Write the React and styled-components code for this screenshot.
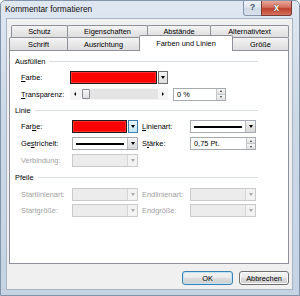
import styled, { createGlobalStyle } from "styled-components";

const Global = createGlobalStyle`
  html, body { margin: 0; padding: 0; background: #fff; }
  body { font-family: "Liberation Sans", Arial, sans-serif; font-size: 7.4px; color: #000; }
`;

const Window = styled.div`
  width: 300px;
  height: 296px;
  box-sizing: border-box;
  border: 1px solid #8393a8;
  border-radius: 5px 5px 0 0;
  background: linear-gradient(#dfe7f1, #ccd8e6 40%, #c6d3e3);
  display: flex;
  flex-direction: column;
`;

const TitleBar = styled.div`
  height: 17px;
  display: flex;
  justify-content: space-between;
  align-items: flex-start;
  padding: 0 7px 0 4px;
`;

const Title = styled.span`
  font-size: 8.3px;
  line-height: 17px;
  color: #111;
`;

const Caption = styled.div`
  display: flex;
`;

const CapBtn = styled.div`
  box-sizing: border-box;
  width: ${(p) => p.$w}px;
  height: 15px;
  border: 1px solid ${(p) => (p.$close ? "#7a3a33" : "#8796aa")};
  border-top: none;
  border-radius: ${(p) => (p.$close ? "0 0 3px 0" : "0 0 0 3px")};
  background: ${(p) =>
    p.$close
      ? "linear-gradient(#e9a99c, #d4705f 45%, #c0402d 55%, #d2735f)"
      : "linear-gradient(#eef3f8, #dde5ee 45%, #cfd9e5 55%, #d9e2ec)"};
  color: ${(p) => (p.$close ? "#fff" : "#4a586c")};
  font-weight: bold;
  font-size: ${(p) => (p.$close ? 10 : 9)}px;
  line-height: 13px;
  text-align: center;
  text-shadow: ${(p) => (p.$close ? "0 0 1px #5a1a10, 0 0 1px #5a1a10" : "none")};
  & + & { margin-left: -1px; }
`;

const Client = styled.div`
  flex: 1;
  margin: 0 6px 5px 5px;
  box-sizing: border-box;
  border: 1px solid #a6b4c6;
  background: #f0f0f0;
  padding: 6px 3px 0 2px;
  display: flex;
  flex-direction: column;
`;

const TabRow = styled.div`
  display: flex;
  align-items: flex-end;
  height: ${(p) => p.$h}px;
  margin-left: ${(p) => p.$indent}px;
`;

const Tab = styled.div`
  box-sizing: border-box;
  width: ${(p) => p.$w}px;
  height: ${(p) => (p.$active ? 16 : p.$h)}px;
  margin-bottom: ${(p) => (p.$active ? -1 : 0)}px;
  position: ${(p) => (p.$active ? "relative" : "static")};
  z-index: ${(p) => (p.$active ? 1 : 0)};
  border: 1px solid #8e9199;
  border-bottom: none;
  border-radius: 2px 2px 0 0;
  background: ${(p) => (p.$active ? "#fff" : "linear-gradient(#f4f4f4, #e8e8e8 50%, #dedede)")};
  display: flex;
  align-items: center;
  justify-content: center;
  white-space: nowrap;
  & + & { margin-left: -1px; }
`;

const Panel = styled.div`
  box-sizing: border-box;
  width: 280px;
  height: 214px;
  border: 1px solid #8e9199;
  background: #fff;
  padding-top: 2px;
`;

const GroupHead = styled.div`
  display: flex;
  align-items: center;
  height: ${(p) => p.$h}px;
  padding-left: 5px;
  margin-right: 30px;
  &::after {
    content: "";
    flex: 1;
    height: 1px;
    margin-left: 4px;
    background: #d8dde3;
  }
`;

const Row = styled.div`
  display: flex;
  align-items: center;
  height: ${(p) => p.$h}px;
  padding-left: 11px;
`;

const Label = styled.span`
  width: ${(p) => p.$w}px;
  margin-left: ${(p) => p.$ml || 0}px;
  color: ${(p) => (p.$disabled ? "#a0a0a0" : "#000")};
  white-space: nowrap;
`;

const Combo = styled.div`
  box-sizing: border-box;
  width: ${(p) => p.$w}px;
  height: 13px;
  display: flex;
  border: 1px solid ${(p) => (p.$disabled ? "#cacaca" : "#a5a9b0")};
  background: ${(p) => (p.$disabled ? "#ececec" : "#fff")};
`;

const Field = styled.div`
  flex: 1;
  display: flex;
  align-items: center;
  padding: 0 3px;
`;

const LineSample = styled.div`
  flex: 1;
  height: 2px;
  background: #000;
`;

const DropBtn = styled.div`
  box-sizing: border-box;
  width: 10px;
  display: flex;
  align-items: center;
  justify-content: center;
  border-left: 1px solid ${(p) => (p.$disabled ? "#d6d6d6" : "#b8bcc2")};
  background: ${(p) => (p.$disabled ? "#f2f2f2" : "linear-gradient(#f6f6f6, #e4e4e4 50%, #d9d9d9)")};
`;

const Arrow = styled.span`
  width: 0;
  height: 0;
  border-left: 2.5px solid transparent;
  border-right: 2.5px solid transparent;
  border-top: 3px solid ${(p) => (p.$disabled ? "#a8a8a8" : "#000")};
`;

const ColorPick = styled.div`
  width: ${(p) => p.$w}px;
  height: 13px;
  display: flex;
`;

const Swatch = styled.div`
  flex: 1;
  background: #f00;
  border: 1px solid #1c1c1c;
  box-shadow: inset 0 0 0 1px #ff3030;
`;

const SplitBtn = styled.div`
  box-sizing: border-box;
  width: 10px;
  margin-left: 1px;
  display: flex;
  align-items: center;
  justify-content: center;
  border: 1px solid ${(p) => (p.$focus ? "#3c7fb1" : "#6f6f6f")};
  background: ${(p) => (p.$focus ? "linear-gradient(#eaf6fd, #c4e5f6)" : "linear-gradient(#f6f6f6, #dedede)")};
`;

const Slider = styled.div`
  box-sizing: border-box;
  width: ${(p) => p.$w}px;
  height: 12px;
  display: flex;
  align-items: center;
  background: #f4f4f4;
`;

const SideArrow = styled.span`
  width: 0;
  height: 0;
  border-top: 2px solid transparent;
  border-bottom: 2px solid transparent;
  ${(p) => (p.$dir === "left" ? "border-right: 2px solid #000;" : "border-left: 2px solid #000;")}
  margin: 0 4px;
`;

const Track = styled.div`
  flex: 1;
  height: 10px;
  display: flex;
  align-items: center;
  background: #e4e4e4;
  margin-left: 2px;
`;

const Thumb = styled.div`
  box-sizing: border-box;
  width: 8px;
  height: 10px;
  border: 1px solid #8a8e94;
  border-radius: 1px;
  background: linear-gradient(#f8f8f8, #dcdcdc);
`;

const Spin = styled.div`
  box-sizing: border-box;
  width: ${(p) => p.$w}px;
  height: 13px;
  margin-left: ${(p) => p.$ml || 0}px;
  display: flex;
  border: 1px solid #a5a9b0;
  background: #fff;
`;

const SpinText = styled.div`
  flex: 1;
  padding-left: 3px;
  line-height: 11px;
`;

const SpinBtns = styled.div`
  width: 8px;
  display: flex;
  flex-direction: column;
  border-left: 1px solid #c4c7cc;
`;

const SpinHalf = styled.div`
  flex: 1;
  display: flex;
  align-items: center;
  justify-content: center;
  background: linear-gradient(#f6f6f6, #e0e0e0);
  & + & { border-top: 1px solid #c4c7cc; }
`;

const Tiny = styled.span`
  width: 0;
  height: 0;
  border-left: 1.5px solid transparent;
  border-right: 1.5px solid transparent;
  ${(p) => (p.$up ? "border-bottom: 2px solid #333;" : "border-top: 2px solid #333;")}
`;

const Footer = styled.div`
  display: flex;
  justify-content: flex-end;
  gap: 6px;
  margin-top: 7px;
`;

const Button = styled.div`
  box-sizing: border-box;
  width: ${(p) => p.$w}px;
  height: 14px;
  border: 1px solid ${(p) => (p.$default ? "#3c7fb1" : "#707070")};
  border-radius: 3px;
  background: linear-gradient(#f2f2f2, #ebebeb 45%, #dddddd 50%, #cfcfcf);
  box-shadow: ${(p) => (p.$default ? "inset 0 0 0 1px #bfe3f7" : "inset 0 0 0 1px #fbfbfb")};
  display: flex;
  align-items: center;
  justify-content: center;
`;

const DropCombo = ({ w, disabled, line }) => (
  <Combo $w={w} $disabled={disabled}>
    <Field>{line && <LineSample />}</Field>
    <DropBtn $disabled={disabled}>
      <Arrow $disabled={disabled} />
    </DropBtn>
  </Combo>
);

const SpinBox = ({ w, ml, value }) => (
  <Spin $w={w} $ml={ml}>
    <SpinText>{value}</SpinText>
    <SpinBtns>
      <SpinHalf>
        <Tiny $up />
      </SpinHalf>
      <SpinHalf>
        <Tiny />
      </SpinHalf>
    </SpinBtns>
  </Spin>
);

const row1 = [
  ["Schutz", 57],
  ["Eigenschaften", 81],
  ["Abstände", 64],
  ["Alternativtext", 79],
];

const row2 = [
  ["Schrift", 59],
  ["Ausrichtung", 73],
  ["Farben und Linien", 94, true],
  ["Größe", 57],
];

export default function App() {
  return (
    <>
      <Global />
      <Window>
        <TitleBar>
          <Title>Kommentar formatieren</Title>
          <Caption>
            <CapBtn $w={19}>?</CapBtn>
            <CapBtn $w={31} $close>
              x
            </CapBtn>
          </Caption>
        </TitleBar>
        <Client>
          <TabRow $h={12} $indent={2}>
            {row1.map(([t, w]) => (
              <Tab key={t} $w={w} $h={12}>
                {t}
              </Tab>
            ))}
          </TabRow>
          <TabRow $h={13} $indent={0}>
            {row2.map(([t, w, a]) => (
              <Tab key={t} $w={w} $h={13} $active={a}>
                {t}
              </Tab>
            ))}
          </TabRow>
          <Panel>
            <GroupHead $h={16}>Ausfüllen</GroupHead>
            <Row $h={17}>
              <Label $w={49}>
                <u>F</u>arbe:
              </Label>
              <ColorPick $w={98}>
                <Swatch />
                <SplitBtn>
                  <Arrow />
                </SplitBtn>
              </ColorPick>
            </Row>
            <Row $h={16}>
              <Label $w={49}>
                <u>T</u>ransparenz:
              </Label>
              <Slider $w={98}>
                <SideArrow $dir="left" />
                <Track>
                  <Thumb />
                </Track>
                <SideArrow $dir="right" />
              </Slider>
              <SpinBox w={53} ml={5} value="0 %" />
            </Row>

            <GroupHead $h={16}>Linie</GroupHead>
            <Row $h={17}>
              <Label $w={51}>
                Far<u>b</u>e:
              </Label>
              <ColorPick $w={66}>
                <Swatch />
                <SplitBtn $focus>
                  <Arrow />
                </SplitBtn>
              </ColorPick>
              <Label $w={48} $ml={4}>
                <u>L</u>inienart:
              </Label>
              <DropCombo w={66} line />
            </Row>
            <Row $h={17}>
              <Label $w={51}>
                Ge<u>s</u>trichelt:
              </Label>
              <DropCombo w={66} line />
              <Label $w={48} $ml={4}>
                S<u>t</u>ärke:
              </Label>
              <SpinBox w={66} value="0,75 Pt." />
            </Row>
            <Row $h={17}>
              <Label $w={51} $disabled>
                Verbindung:
              </Label>
              <DropCombo w={66} disabled />
            </Row>

            <GroupHead $h={17}>Pfeile</GroupHead>
            <Row $h={16}>
              <Label $w={51} $disabled>
                Startlinienart:
              </Label>
              <DropCombo w={66} disabled />
              <Label $w={48} $ml={4} $disabled>
                Endlinienart:
              </Label>
              <DropCombo w={66} disabled />
            </Row>
            <Row $h={16}>
              <Label $w={51} $disabled>
                Startgröße:
              </Label>
              <DropCombo w={66} disabled />
              <Label $w={48} $ml={4} $disabled>
                Endgröße:
              </Label>
              <DropCombo w={66} disabled />
            </Row>
          </Panel>
          <Footer>
            <Button $w={51} $default>
              OK
            </Button>
            <Button $w={50}>Abbrechen</Button>
          </Footer>
        </Client>
      </Window>
    </>
  );
}
